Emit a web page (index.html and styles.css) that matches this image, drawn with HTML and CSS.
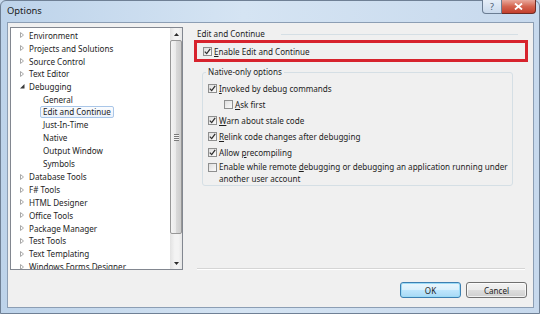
FILE: index.html
```html
<!DOCTYPE html>
<html lang="en">
<head>
    <meta charset="UTF-8">
    <title>Options</title>
    <link rel="stylesheet" href="styles.css">
</head>
<body>

    <div class="window">
        <div class="titlebar">
            <span class="title">Options</span>
            <div class="caption-buttons">
                <span class="cap-btn help">?</span>
                <span class="cap-btn close">
                    <svg width="9" height="7" viewBox="0 0 9 7"><path d="M1 0.5 L8 6.5 M8 0.5 L1 6.5" stroke="#fff" stroke-width="1.8"/></svg>
                </span>
            </div>
        </div>

        <div class="client">
            <div class="main">
                <!-- Baum links -->
                <div class="tree">
                    <ul class="tree-list">
                        <li class="node"><span class="twisty"><svg width="4" height="6" viewBox="0 0 4 6"><path d="M0.5 0.5 L3.5 3 L0.5 5.5 Z" fill="none" stroke="#a8a8a8"/></svg></span>Environment</li>
                        <li class="node"><span class="twisty"><svg width="4" height="6" viewBox="0 0 4 6"><path d="M0.5 0.5 L3.5 3 L0.5 5.5 Z" fill="none" stroke="#a8a8a8"/></svg></span>Projects and Solutions</li>
                        <li class="node"><span class="twisty"><svg width="4" height="6" viewBox="0 0 4 6"><path d="M0.5 0.5 L3.5 3 L0.5 5.5 Z" fill="none" stroke="#a8a8a8"/></svg></span>Source Control</li>
                        <li class="node"><span class="twisty"><svg width="4" height="6" viewBox="0 0 4 6"><path d="M0.5 0.5 L3.5 3 L0.5 5.5 Z" fill="none" stroke="#a8a8a8"/></svg></span>Text Editor</li>
                        <li class="node"><span class="twisty"><svg width="5" height="5" viewBox="0 0 5 5"><path d="M4.5 0 V4.5 H0 Z" fill="#3a3a3a"/></svg></span>Debugging</li>
                        <li class="child"><span class="label">General</span></li>
                        <li class="child"><span class="label selected">Edit and Continue</span></li>
                        <li class="child"><span class="label">Just-In-Time</span></li>
                        <li class="child"><span class="label">Native</span></li>
                        <li class="child"><span class="label">Output Window</span></li>
                        <li class="child"><span class="label">Symbols</span></li>
                        <li class="node"><span class="twisty"><svg width="4" height="6" viewBox="0 0 4 6"><path d="M0.5 0.5 L3.5 3 L0.5 5.5 Z" fill="none" stroke="#a8a8a8"/></svg></span>Database Tools</li>
                        <li class="node"><span class="twisty"><svg width="4" height="6" viewBox="0 0 4 6"><path d="M0.5 0.5 L3.5 3 L0.5 5.5 Z" fill="none" stroke="#a8a8a8"/></svg></span>F# Tools</li>
                        <li class="node"><span class="twisty"><svg width="4" height="6" viewBox="0 0 4 6"><path d="M0.5 0.5 L3.5 3 L0.5 5.5 Z" fill="none" stroke="#a8a8a8"/></svg></span>HTML Designer</li>
                        <li class="node"><span class="twisty"><svg width="4" height="6" viewBox="0 0 4 6"><path d="M0.5 0.5 L3.5 3 L0.5 5.5 Z" fill="none" stroke="#a8a8a8"/></svg></span>Office Tools</li>
                        <li class="node"><span class="twisty"><svg width="4" height="6" viewBox="0 0 4 6"><path d="M0.5 0.5 L3.5 3 L0.5 5.5 Z" fill="none" stroke="#a8a8a8"/></svg></span>Package Manager</li>
                        <li class="node"><span class="twisty"><svg width="4" height="6" viewBox="0 0 4 6"><path d="M0.5 0.5 L3.5 3 L0.5 5.5 Z" fill="none" stroke="#a8a8a8"/></svg></span>Test Tools</li>
                        <li class="node"><span class="twisty"><svg width="4" height="6" viewBox="0 0 4 6"><path d="M0.5 0.5 L3.5 3 L0.5 5.5 Z" fill="none" stroke="#a8a8a8"/></svg></span>Text Templating</li>
                        <li class="node"><span class="twisty"><svg width="4" height="6" viewBox="0 0 4 6"><path d="M0.5 0.5 L3.5 3 L0.5 5.5 Z" fill="none" stroke="#a8a8a8"/></svg></span>Windows Forms Designer</li>
                    </ul>
                    <div class="scrollbar">
                        <div class="sb-arrow"><svg width="5" height="3" viewBox="0 0 5 3"><path d="M0 3 L2.5 0 L5 3 Z" fill="#2b2b2b"/></svg></div>
                        <div class="sb-track">
                            <div class="sb-thumb"><span class="grip"></span></div>
                        </div>
                        <div class="sb-arrow"><svg width="5" height="3" viewBox="0 0 5 3"><path d="M0 0 L2.5 3 L5 0 Z" fill="#2b2b2b"/></svg></div>
                    </div>
                </div>

                <!-- Einstellungen rechts -->
                <div class="settings">
                    <div class="section-head">
                        <span>Edit and Continue</span>
                        <span class="head-line"></span>
                    </div>

                    <div class="highlight">
                        <div class="check-row">
                            <span class="check"><svg width="7" height="7" viewBox="0 0 7 7"><path d="M0.8 3.6 L2.7 5.6 L6.2 0.9" fill="none" stroke="#303030" stroke-width="1.3"/></svg></span>
                            <span><u>E</u>nable Edit and Continue</span>
                        </div>
                    </div>

                    <fieldset class="group">
                        <legend>Native-only options</legend>
                        <div class="check-row">
                            <span class="check"><svg width="7" height="7" viewBox="0 0 7 7"><path d="M0.8 3.6 L2.7 5.6 L6.2 0.9" fill="none" stroke="#303030" stroke-width="1.3"/></svg></span>
                            <span><u>I</u>nvoked by debug commands</span>
                        </div>
                        <div class="check-row indent">
                            <span class="check"></span>
                            <span><u>A</u>sk first</span>
                        </div>
                        <div class="check-row">
                            <span class="check"><svg width="7" height="7" viewBox="0 0 7 7"><path d="M0.8 3.6 L2.7 5.6 L6.2 0.9" fill="none" stroke="#303030" stroke-width="1.3"/></svg></span>
                            <span><u>W</u>arn about stale code</span>
                        </div>
                        <div class="check-row">
                            <span class="check"><svg width="7" height="7" viewBox="0 0 7 7"><path d="M0.8 3.6 L2.7 5.6 L6.2 0.9" fill="none" stroke="#303030" stroke-width="1.3"/></svg></span>
                            <span><u>R</u>elink code changes after debugging</span>
                        </div>
                        <div class="check-row">
                            <span class="check"><svg width="7" height="7" viewBox="0 0 7 7"><path d="M0.8 3.6 L2.7 5.6 L6.2 0.9" fill="none" stroke="#303030" stroke-width="1.3"/></svg></span>
                            <span>Allow <u>p</u>recompiling</span>
                        </div>
                        <div class="check-row multi">
                            <span class="check"></span>
                            <span>Enable while remote <u>d</u>ebugging or debugging an application running under<br>another user account</span>
                        </div>
                    </fieldset>

                    <div class="separator"></div>
                </div>
            </div>

            <div class="buttons">
                <button class="btn default">OK</button>
                <button class="btn">Cancel</button>
            </div>
        </div>
    </div>

</body>
</html>
```

FILE: styles.css
```css
body {
    margin: 0;
    font-family: "Noto Sans", "Open Sans", sans-serif;
    font-size: 8.1px;
    color: #1e1e1e;
    background-color: #c8daee;
}

.window {
    width: 540px;
    height: 314px;
    box-sizing: border-box;
    display: flex;
    flex-direction: column;
    background: linear-gradient(90deg, #bdd3ea 0%, #d5e4f3 45%, #c7d9ed 100%);
    border: 1px solid #6f8095;
    border-radius: 6px 6px 0 0;
}

.titlebar {
    height: 21px;
    display: flex;
    align-items: flex-start;
}

.title {
    font-size: 9.4px;
    padding: 3px 0 0 6px;
    color: #1b1b1b;
}

.caption-buttons {
    margin-left: auto;
    margin-right: 3px;
    margin-top: -1px;
    display: flex;
}

.cap-btn {
    height: 14px;
    box-sizing: border-box;
    display: flex;
    justify-content: center;
    align-items: center;
}

.help {
    width: 20px;
    border: 1px solid #6b7d93;
    border-top: none;
    border-radius: 0 0 0 4px;
    background: linear-gradient(#e6eef8, #c9d9ec);
    color: #4a5a70;
    font-size: 9px;
    line-height: 1;
}

.close {
    width: 34px;
    border: 1px solid #6e2c25;
    border-left: none;
    border-top: none;
    border-radius: 0 0 4px 0;
    background: linear-gradient(#e9a99c, #d4644f 50%, #c33f2d);
}

.client {
    flex: 1;
    margin: 0 5px 5px 6px;
    background-color: #f0f0f0;
    border: 1px solid #8c9eb4;
    display: flex;
    flex-direction: column;
}

.main {
    display: flex;
    padding: 4px 0 0 2px;
}

/* Baum */
.tree {
    width: 173px;
    height: 243px;
    box-sizing: border-box;
    border: 1px solid #828790;
    background-color: white;
    display: flex;
}

.tree-list {
    flex: 1;
    list-style: none;
    margin: 0;
    padding: 1px 0 0 0;
    overflow: hidden;
}

.tree-list li {
    height: 12.85px;
    display: flex;
    align-items: center;
    white-space: nowrap;
}

.node {
    padding-left: 9px;
}

.twisty {
    width: 9px;
    display: flex;
    align-items: center;
}

.child {
    padding-left: 29px;
}

.label {
    padding: 0 2px;
    border: 1px solid transparent;
    line-height: 10px;
}

.label.selected {
    border-color: #a9c6e8;
    border-radius: 2px;
    background: linear-gradient(#fbfcfe, #ebf2fb);
}

.scrollbar {
    width: 12px;
    display: flex;
    flex-direction: column;
    background: linear-gradient(90deg, #e2e2e2, #f3f3f3 40%, #f3f3f3 70%, #e6e6e6);
}

.sb-arrow {
    height: 12px;
    display: flex;
    justify-content: center;
    align-items: center;
}

.sb-track {
    flex: 1;
}

.sb-thumb {
    height: 194px;
    box-sizing: border-box;
    border: 1px solid #979797;
    border-radius: 2px;
    background: linear-gradient(90deg, #f4f4f4, #e9e9e9 50%, #dadada 51%, #cdcdcd);
    display: flex;
    justify-content: center;
    align-items: center;
}

.grip {
    width: 5px;
    height: 7px;
    background: repeating-linear-gradient(#7a7a7a 0 1px, #f2f2f2 1px 2px);
}

/* Einstellungen */
.settings {
    width: 334px;
    margin-left: 11px;
    display: flex;
    flex-direction: column;
}

.section-head {
    height: 13px;
    display: flex;
    align-items: center;
    padding-left: 3px;
}

.head-line {
    flex: 1;
    height: 1px;
    margin: 1px 10px 0 16px;
    background-color: #d5dfe5;
}

.highlight {
    height: 22px;
    box-sizing: border-box;
    border: 3px solid #d7232d;
    padding-left: 6px;
    display: flex;
    align-items: center;
}

.check-row {
    height: 16px;
    display: flex;
    align-items: center;
    gap: 2px;
    white-space: nowrap;
}

.check {
    width: 9px;
    height: 9px;
    box-sizing: border-box;
    border: 1px solid #8e8f8f;
    background: linear-gradient(135deg, #dedede, #fbfbfb);
    display: flex;
    justify-content: center;
    align-items: center;
    flex-shrink: 0;
}

.check-row u {
    text-decoration-thickness: 1px;
    text-underline-offset: 1px;
}

.group {
    margin: 4px 15px 0 8px;
    padding: 2px 0 0 5px;
    border: 1px solid #d5dfe5;
    border-radius: 3px;
    min-width: 0;
}

.group legend {
    padding: 0 2px;
    margin-left: -2px;
    line-height: 12px;
}

.indent {
    padding-left: 16px;
}

.check-row.multi {
    height: auto;
    align-items: flex-start;
    line-height: 12px;
    padding-top: 1px;
}

.check-row.multi .check {
    margin-top: 1.5px;
}

.separator {
    margin: auto 3px 0 3px;
    height: 1px;
    border-top: 1px solid #d5d5d5;
    background-color: white;
}

.buttons {
    display: flex;
    justify-content: flex-end;
    gap: 5px;
    padding: 12px 6px 0 0;
}

.btn {
    width: 61px;
    height: 16px;
    padding: 0;
    font-family: inherit;
    font-size: 8.1px;
    color: #1e1e1e;
    border: 1px solid #707070;
    border-radius: 3px;
    background: linear-gradient(#f2f2f2 0%, #ebebeb 50%, #dddddd 51%, #cfcfcf 100%);
    box-shadow: inset 0 0 0 1px rgba(255, 255, 255, 0.7);
}

.btn.default {
    border-color: #3c7fb1;
    background: linear-gradient(#eaf6fd 0%, #d9f0fc 50%, #bee6fd 51%, #a7d9f5 100%);
    box-shadow: inset 0 0 0 1px #9cdbf6;
}
```
